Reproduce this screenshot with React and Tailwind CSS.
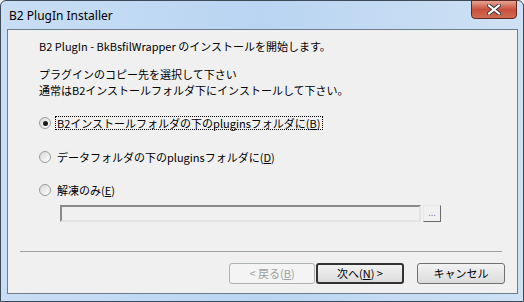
const jp = { fontFamily: '"Noto Sans CJK JP", "Liberation Sans", sans-serif' }

function Radio({ checked, label, mnemonic, focused }) {
  return (
    <div className="flex items-center h-[14px]">
      <span className="relative flex items-center justify-center w-[12px] h-[12px] rounded-full border border-[#9a9a9a] bg-gradient-to-br from-[#d8d8d8] to-[#ffffff]">
        {checked && <span className="w-[5px] h-[5px] rounded-full bg-[#1a1a1a]" />}
      </span>
      <span
        className={`ml-[5px] px-[1px] leading-[12px] text-[11px] text-black ${focused ? 'outline outline-1 outline-dotted outline-black' : ''}`}
      >
        {label}(<span className="underline">{mnemonic}</span>)
      </span>
    </div>
  )
}

function Button({ children, disabled, primary }) {
  return (
    <button
      className={`w-full h-[21px] flex items-center justify-center text-[11px] rounded-[3px] bg-gradient-to-b ${
        primary ? 'border-2 border-[#333]' : 'border border-[#707070]'
      } ${disabled ? 'text-[#a0a0a0] border-[#adb2b5] from-[#f4f4f4] to-[#f4f4f4]' : 'text-black from-[#f2f2f2] to-[#dcdcdc]'}`}
    >
      {children}
    </button>
  )
}

export default function App() {
  return (
    <div className="w-[524px] h-[302px] overflow-hidden bg-[#f0f0f0]">
      <div className="w-full h-full rounded-t-[6px] border border-[#3c4a5a] bg-gradient-to-r from-[#c9def5] via-[#b9d5f2] to-[#cfe1f4] flex flex-col">
        <div className="h-[28px] flex items-start relative">
          <span
            className="ml-[8px] mt-[6px] text-[12px] text-black"
            style={{ fontFamily: '"Noto Sans", "Liberation Sans", sans-serif' }}
          >
            B2 PlugIn Installer
          </span>
          <div className="absolute right-[6px] top-[-1px] w-[46px] h-[19px] rounded-b-[4px] border border-[#5a2a22] bg-gradient-to-b from-[#e5a293] via-[#c9503b] to-[#d06a52] flex items-center justify-center">
            <svg width="14" height="11" viewBox="0 0 14 11">
              <path d="M2 1.5 L12 9.5 M12 1.5 L2 9.5" stroke="#3a3a3a" strokeWidth="4" strokeLinecap="square" />
              <path d="M2 1.5 L12 9.5 M12 1.5 L2 9.5" stroke="#ffffff" strokeWidth="2" strokeLinecap="square" />
            </svg>
          </div>
        </div>
        <div className="ml-[6px] mr-[5px] mb-[7px] flex-1 border border-[#6c7c8f] bg-[#f0f0f0] flex flex-col" style={jp}>
          <div className="pl-[31px] pt-[10px] text-[11px] leading-[12px] text-black">
            B2 PlugIn - BkBsfilWrapper のインストールを開始します。
          </div>
          <div className="pl-[31px] mt-[14px] text-[11px] leading-[16px] text-black">
            <div>プラグインのコピー先を選択して下さい</div>
            <div>通常はB2インストールフォルダ下にインストールして下さい。</div>
          </div>
          <div className="pl-[31px] mt-[18px]">
            <Radio checked focused label="B2インストールフォルダの下のpluginsフォルダに" mnemonic="B" />
          </div>
          <div className="pl-[31px] mt-[20px]">
            <Radio label="データフォルダの下のpluginsフォルダに" mnemonic="D" />
          </div>
          <div className="pl-[31px] mt-[19px]">
            <Radio label="解凍のみ" mnemonic="E" />
          </div>
          <div className="pl-[52px] mt-[8px] flex items-center gap-[2px]">
            <div className="w-[361px] h-[17px] border-2 border-t-[#8a8a8a] border-l-[#8a8a8a] border-r-[#e3e3e3] border-b-[#e3e3e3] bg-[#f0f0f0]" />
            <div className="w-[18px] h-[17px] border border-t-[#e8e8e8] border-l-[#e8e8e8] border-r-[#6a6a6a] border-b-[#6a6a6a] flex items-center justify-center text-[9px] leading-none text-[#8a8a8a] pb-[2px]">
              ...
            </div>
          </div>
          <div className="ml-[12px] mr-[15px] mt-[29px] h-px bg-[#a0a0a0]" />
          <div className="mt-[11px] mr-[12px] flex justify-end">
            <div className="w-[86px]"><Button disabled>&lt; 戻る(<span className="underline">B</span>)</Button></div>
            <div className="w-[88px] ml-[1px]"><Button primary>次へ(<span className="underline">N</span>) &gt;</Button></div>
            <div className="w-[88px] ml-[13px]"><Button>キャンセル</Button></div>
          </div>
        </div>
      </div>
    </div>
  )
}
